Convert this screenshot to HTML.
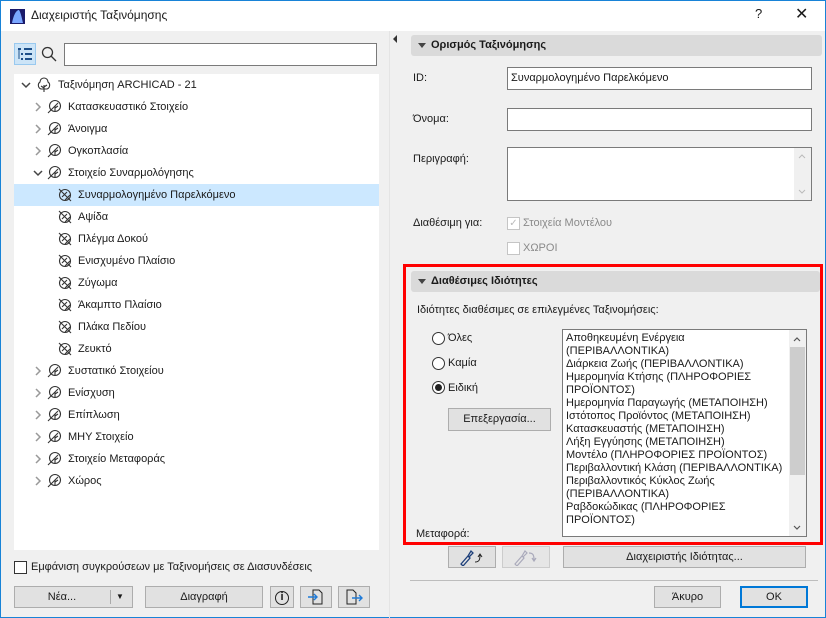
<!DOCTYPE html><html><head><meta charset="utf-8"><style>
*{box-sizing:border-box;margin:0;padding:0}
body{width:826px;height:618px;overflow:hidden;background:#f0f0f0;font-family:"Liberation Sans","DejaVu Sans",sans-serif;font-size:11px;color:#1a1a1a;position:relative}
.a{position:absolute;white-space:nowrap}
.win{position:absolute;left:0;top:0;width:826px;height:618px;border:1px solid #1883d7}
.title{position:absolute;left:1px;top:1px;width:824px;height:30px;background:#fff}
.inp{position:absolute;background:#fff;border:1px solid #7a7a7a}
.btn{position:absolute;background:#e1e1e1;border:1px solid #adadad;text-align:center;line-height:20px}
.hdr{position:absolute;background:#dadada;border-radius:3px;font-weight:bold;padding-left:20px;line-height:20px}
.hdr:before{content:"";position:absolute;left:7px;top:8px;border-left:4px solid transparent;border-right:4px solid transparent;border-top:5px solid #444}
.row{position:absolute;height:22px;line-height:22px;left:14px;width:365px}
.chev{position:absolute;top:0}
.ic{position:absolute;top:3px}
.cb{position:absolute;width:13px;height:13px;border:1px solid #333;background:#fff}
.rad{position:absolute;width:13px;height:13px;border:1px solid #333;border-radius:50%;background:#fff}
</style></head><body>
<div class="win"></div>
<div class="title"></div>
<svg class="a" style="left:10px;top:9px" width="15" height="15"><rect width="15" height="15" fill="#1a1a6a"/><path d="M2 14 C4 4 7 1 9 1 C11 4 12 10 13 14Z" fill="#7aa6ff"/></svg>
<div class="a" style="left:31px;top:8px;font-size:12px">Διαχειριστής Ταξινόμησης</div>
<div class="a" style="left:755px;top:6px;font-size:13px">?</div>
<div class="a" style="left:795px;top:4px;font-size:16px">✕</div>
<!-- left -->
<div class="a" style="left:14px;top:43px;width:22px;height:22px;background:#cce4f7;border:1px solid #99c9ef"></div>
<svg class="a" style="left:17px;top:47px" width="16" height="14" stroke="#1d4f8a" stroke-width="2"><path d="M1 2h3M7 2h8M4 7h2M8 7h7M4 12h2M8 12h7"/><path d="M2 3v9" stroke-width="1"/></svg>
<svg class="a" style="left:41px;top:46px" width="16" height="16" fill="none" stroke="#333" stroke-width="1.3"><circle cx="6.5" cy="6.5" r="5"/><path d="M10 10l5 5"/></svg>
<div class="inp" style="left:64px;top:43px;width:313px;height:23px"></div>
<div class="a" style="left:14px;top:74px;width:365px;height:476px;background:#fff"></div>
<div class="a" style="left:14px;top:184px;width:365px;height:22px;background:#cce8ff"></div>
<div id="tree"></div>
<div class="cb" style="left:14px;top:561px"></div>
<div class="a" style="left:31px;top:561px">Εμφάνιση συγκρούσεων με Ταξινομήσεις σε Διασυνδέσεις</div>
<div class="btn" style="left:14px;top:586px;width:119px;height:22px"><span style="position:absolute;left:0;width:94px">Νέα...</span><span style="position:absolute;left:95px;top:3px;height:14px;border-left:1px solid #aaa"></span><span style="position:absolute;left:101px;font-size:8px">▼</span></div>
<div class="btn" style="left:145px;top:586px;width:118px;height:22px">Διαγραφή</div>
<div class="btn" style="left:270px;top:586px;width:24px;height:22px"><span style="display:inline-block;width:14px;height:14px;border:1.5px solid #222;border-radius:50%;line-height:11px;font-weight:bold;margin-top:3px">i</span></div>
<div class="btn" style="left:300px;top:586px;width:32px;height:22px"><svg width="20" height="18" style="margin-top:1px" fill="none"><path d="M7 2h6l3 3v11H7z" stroke="#222"/><path d="M2 9h9M8 6l3 3-3 3" stroke="#1e7ad8" stroke-width="1.4"/></svg></div>
<div class="btn" style="left:338px;top:586px;width:32px;height:22px"><svg width="20" height="18" style="margin-top:1px" fill="none"><path d="M3 2h6l3 3v11H3z" stroke="#222"/><path d="M8 10h10M15 7l3 3-3 3" stroke="#1e7ad8" stroke-width="1.4"/></svg></div>
<!-- divider -->
<div class="a" style="left:389px;top:31px;width:1px;height:587px;background:#e4e4e4"></div>
<div class="a" style="left:393px;top:35px;border-top:4px solid transparent;border-bottom:4px solid transparent;border-right:4px solid #333"></div>
<!-- right -->
<div class="hdr" style="left:411px;top:35px;width:411px;height:21px">Ορισμός Ταξινόμησης</div>
<div class="a" style="left:413px;top:72px">ID:</div>
<div class="inp" style="left:507px;top:67px;width:305px;height:23px;padding:4px 3px">Συναρμολογημένο Παρελκόμενο</div>
<div class="a" style="left:413px;top:113px">Όνομα:</div>
<div class="inp" style="left:507px;top:108px;width:305px;height:23px"></div>
<div class="a" style="left:413px;top:153px">Περιγραφή:</div>
<div class="inp" style="left:507px;top:147px;width:305px;height:54px"><div style="position:absolute;right:0;top:0;width:17px;height:52px;background:#f0f0f0"><svg width="17" height="52" fill="none" stroke="#bbb"><path d="M5 10l3-3 3 3M5 42l3 3 3-3"/></svg></div></div>
<div class="a" style="left:413px;top:217px">Διαθέσιμη για:</div>
<div class="cb" style="left:507px;top:217px;border-color:#c5c5c5;color:#bbb;font-size:10px;line-height:11px;text-align:center">✓</div>
<div class="a" style="left:523px;top:217px;color:#8a8a8a">Στοιχεία Μοντέλου</div>
<div class="cb" style="left:507px;top:242px;border-color:#c5c5c5"></div>
<div class="a" style="left:523px;top:242px;color:#8a8a8a">ΧΩΡΟΙ</div>
<div class="a" style="left:403px;top:264px;width:420px;height:281px;border:3px solid #f00"></div>
<div class="hdr" style="left:411px;top:271px;width:409px;height:21px">Διαθέσιμες Ιδιότητες</div>
<div class="a" style="left:417px;top:304px">Ιδιότητες διαθέσιμες σε επιλεγμένες Ταξινομήσεις:</div>
<div class="rad" style="left:432px;top:332px"></div><div class="a" style="left:448px;top:332px">Όλες</div>
<div class="rad" style="left:432px;top:357px"></div><div class="a" style="left:448px;top:357px">Καμία</div>
<div class="rad" style="left:432px;top:381px"><div style="width:7px;height:7px;border-radius:50%;background:#222;margin:2px"></div></div><div class="a" style="left:448px;top:382px">Ειδική</div>
<div class="btn" style="left:448px;top:408px;width:103px;height:23px">Επεξεργασία...</div>
<div class="a" style="left:416px;top:528px">Μεταφορά:</div>
<div class="inp" style="left:562px;top:329px;width:245px;height:208px;overflow:hidden">
<div style="position:absolute;left:3px;top:2px;line-height:13px;white-space:nowrap">Αποθηκευμένη Ενέργεια<br>(ΠΕΡΙΒΑΛΛΟΝΤΙΚΑ)<br>Διάρκεια Ζωής (ΠΕΡΙΒΑΛΛΟΝΤΙΚΑ)<br>Ημερομηνία Κτήσης (ΠΛΗΡΟΦΟΡΙΕΣ<br>ΠΡΟΪΟΝΤΟΣ)<br>Ημερομηνία Παραγωγής (ΜΕΤΑΠΟΙΗΣΗ)<br>Ιστότοπος Προϊόντος (ΜΕΤΑΠΟΙΗΣΗ)<br>Κατασκευαστής (ΜΕΤΑΠΟΙΗΣΗ)<br>Λήξη Εγγύησης (ΜΕΤΑΠΟΙΗΣΗ)<br>Μοντέλο (ΠΛΗΡΟΦΟΡΙΕΣ ΠΡΟΪΟΝΤΟΣ)<br>Περιβαλλοντική Κλάση (ΠΕΡΙΒΑΛΛΟΝΤΙΚΑ)<br>Περιβαλλοντικός Κύκλος Ζωής<br>(ΠΕΡΙΒΑΛΛΟΝΤΙΚΑ)<br>Ραβδοκώδικας (ΠΛΗΡΟΦΟΡΙΕΣ<br>ΠΡΟΪΟΝΤΟΣ)</div>
<div style="position:absolute;right:0;top:0;width:17px;height:206px;background:#f0f0f0"><div style="position:absolute;left:1px;top:17px;width:15px;height:128px;background:#cdcdcd"></div><svg style="position:absolute;left:0;top:0" width="17" height="206" fill="none" stroke="#555" stroke-width="1.2"><path d="M5 11l3-3 3 3M5 196l3 3 3-3"/></svg></div></div>
<div class="btn" style="left:448px;top:546px;width:48px;height:22px"><svg width="30" height="18" style="margin-top:1px" fill="none"><path d="M4 16l7-8 2 2-7 8zM11 8l3-5 2 2-4 4" stroke="#1d3f7a" stroke-width="1.3"/><path d="M18 14c4 0 5-2 5-7M21 9l2-3 2 3" stroke="#222"/></svg></div>
<div class="btn" style="left:502px;top:546px;width:48px;height:22px;background:#e6e6e6;border-color:#ccc"><svg width="30" height="18" style="margin-top:1px" fill="none" stroke="#aab" stroke-width="1.2"><path d="M4 16l7-8 2 2-7 8zM11 8l3-5 2 2-4 4"/><path d="M18 5c4 0 5 2 5 7M21 10l2 3 2-3"/></svg></div>
<div class="btn" style="left:563px;top:546px;width:243px;height:22px">Διαχειριστής Ιδιότητας...</div>
<div class="a" style="left:410px;top:580px;width:408px;height:1px;background:#bdbdbd"></div>
<div class="btn" style="left:654px;top:586px;width:67px;height:22px">Άκυρο</div>
<div class="btn" style="left:740px;top:586px;width:68px;height:22px;border:2px solid #0078d7;line-height:18px">OK</div>
<script>
var rows=[
[0,1,'Ταξινόμηση ARCHICAD - 21',1],
[1,0,'Κατασκευαστικό Στοιχείο'],[1,0,'Άνοιγμα'],[1,0,'Ογκοπλασία'],[1,1,'Στοιχείο Συναρμολόγησης'],
[2,-1,'Συναρμολογημένο Παρελκόμενο'],[2,-1,'Αψίδα'],[2,-1,'Πλέγμα Δοκού'],[2,-1,'Ενισχυμένο Πλαίσιο'],[2,-1,'Ζύγωμα'],[2,-1,'Άκαμπτο Πλαίσιο'],[2,-1,'Πλάκα Πεδίου'],[2,-1,'Ζευκτό'],
[1,0,'Συστατικό Στοιχείου'],[1,0,'Ενίσχυση'],[1,0,'Επίπλωση'],[1,0,'ΜΗΥ Στοιχείο'],[1,0,'Στοιχείο Μεταφοράς'],[1,0,'Χώρος']];
var h='';
var leaf='<path d="M2 14 L12 4" /><circle cx="9" cy="7" r="5.5"/><path d="M9 7v5M9 9l3-2"/>';
var tree='<path d="M8 15V8M8 11l-3-2M8 10l3-2"/><path d="M5 12a4 4 0 0 1-1-7a4 4 0 0 1 8 0a4 4 0 0 1-1 7z"/>';
var dleaf='<circle cx="8" cy="8" r="5.5"/><path d="M2 2l12 12M5 10l5-5M8 13l5-5"/>';
rows.forEach(function(r,i){
 var y=74+i*22,lv=r[0];
 var cx=[7,19][lv]||0, ix=[22,32,43][lv], tx=[44,54,64][lv];
 h+='<div class="row" style="top:'+y+'px">';
 if(r[1]>=0)h+='<span class="chev" style="left:'+cx+'px">'+(r[1]?'<svg width="10" height="22"><path d="M1 9l4 4 4-4" fill="none" stroke="#444" stroke-width="1.5"/></svg>':'<svg width="10" height="22"><path d="M3 7l4 4-4 4" fill="none" stroke="#999" stroke-width="1.5"/></svg>')+'</span>';
 h+='<svg class="ic" style="left:'+ix+'px" width="16" height="16" fill="none" stroke="#333" stroke-width="1.1">'+(r[3]?tree:(lv==2?dleaf:leaf))+'</svg>';
 h+='<span class="a" style="left:'+tx+'px">'+r[2]+'</span></div>';
});
document.getElementById('tree').innerHTML=h;
</script>
</body></html>
